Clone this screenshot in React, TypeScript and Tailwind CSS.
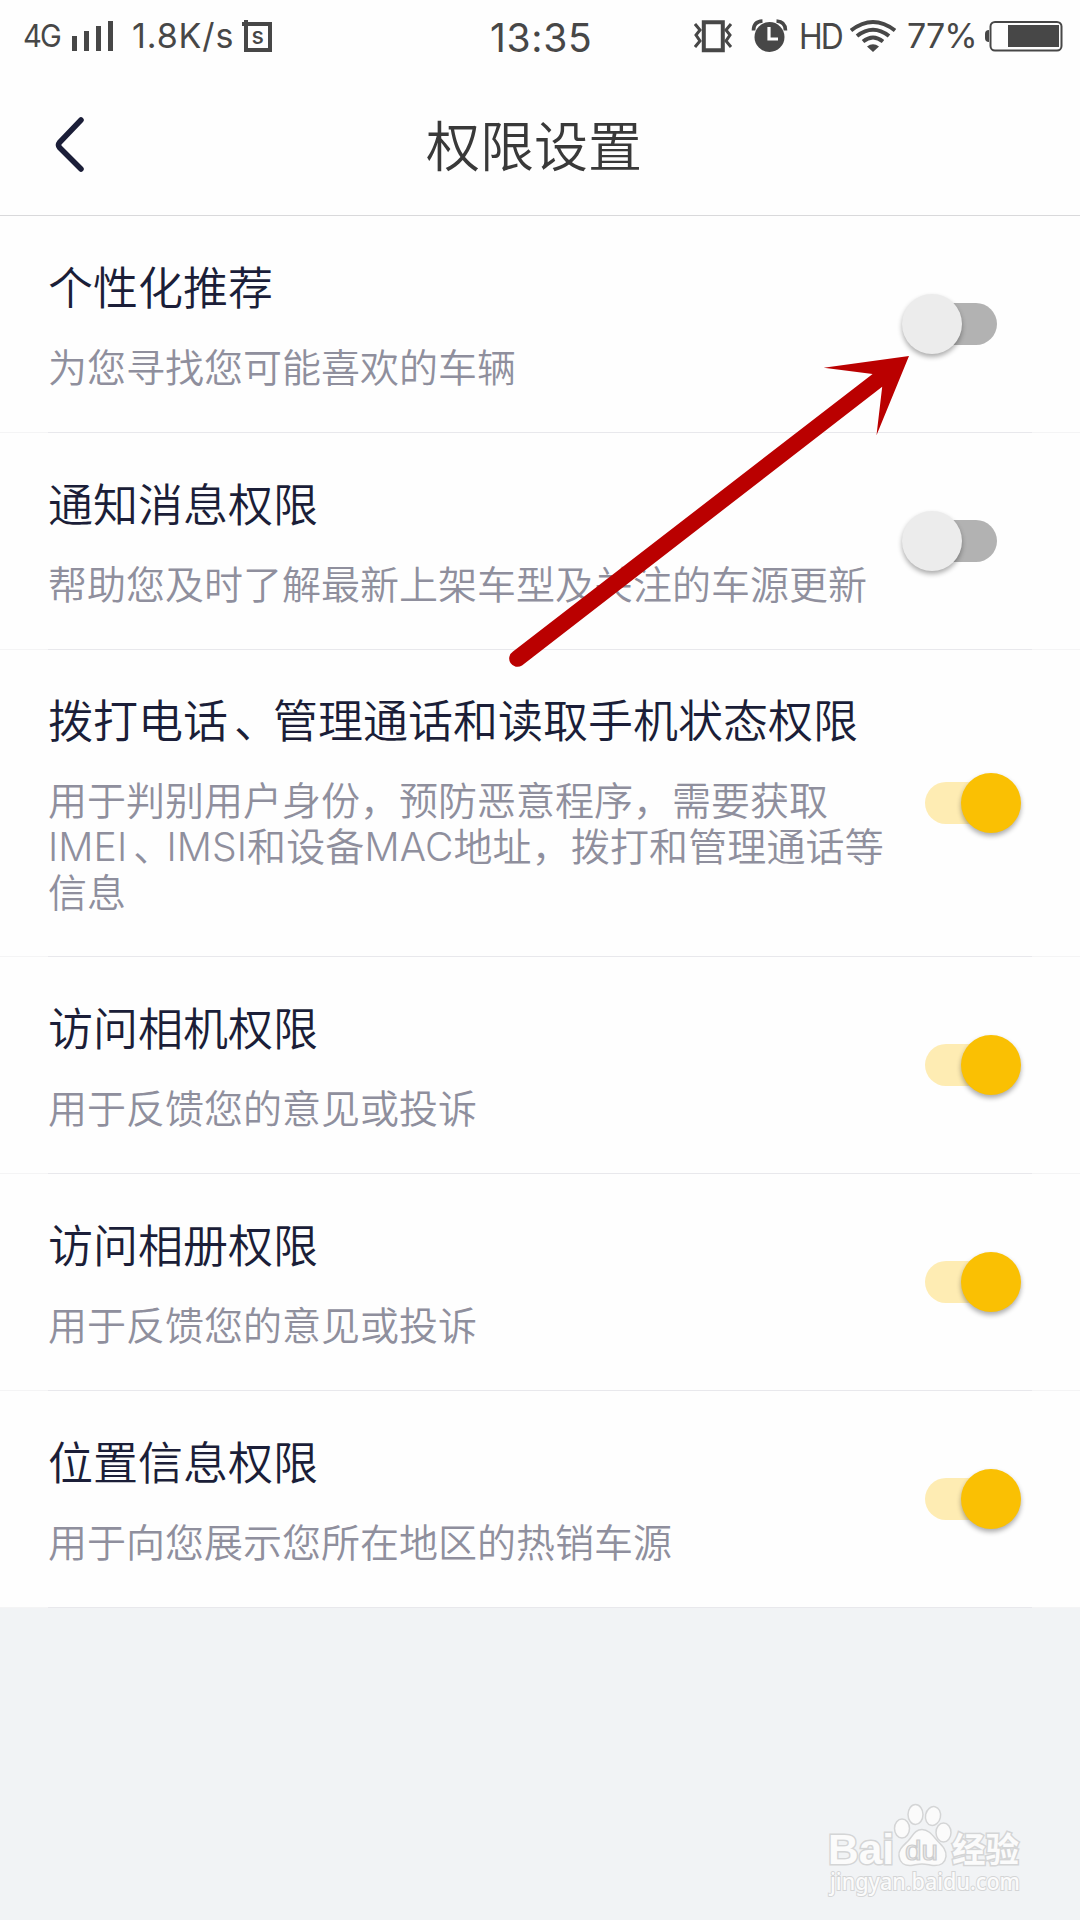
import React from 'react';

type Permission = { title: string; lines: string[]; on: boolean };

const permissions: Permission[] = [
  { title: '个性化推荐', lines: ['为您寻找您可能喜欢的车辆'], on: false },
  { title: '通知消息权限', lines: ['帮助您及时了解最新上架车型及关注的车源更新'], on: false },
  {
    title: '拨打电话、管理通话和读取手机状态权限',
    lines: [
      '用于判别用户身份，预防恶意程序，需要获取',
      'IMEI、IMSI和设备MAC地址，拨打和管理通话等',
      '信息',
    ],
    on: true,
  },
  { title: '访问相机权限', lines: ['用于反馈您的意见或投诉'], on: true },
  { title: '访问相册权限', lines: ['用于反馈您的意见或投诉'], on: true },
  { title: '位置信息权限', lines: ['用于向您展示您所在地区的热销车源'], on: true },
];

function StatusBar() {
  return (
    <div className="relative flex h-[72px] items-center justify-between pl-[23px] pr-[17px] font-['Inter','Noto_Sans',sans-serif] text-[#474747]">
      <div className="flex items-center">
        <span className="w-[49px] origin-left scale-x-[0.94] text-[31px] leading-[72px] tracking-[-2px]">4G</span>
        <svg width="41" height="72" viewBox="0 0 41 72" fill="#474747">
          <path d="M0 36h5v15H0zM12 31h5v20h-5zM24 26h5v25h-5zM36 21h5v30h-5z" />
        </svg>
        <span className="ml-[19px] w-[110px] text-[34px] leading-[76px] tracking-[0.9px]">1.8K/s</span>
        <span className="relative block h-[72px] w-[30px]">
          <svg className="absolute inset-0" width="30" height="72" viewBox="0 0 30 72" fill="none" stroke="#474747">
            <path d="M4 24h24v26H4z" strokeWidth="4" />
            <path d="M0 24h6M4 20v5" strokeWidth="4" />
          </svg>
          <span className="absolute left-[9.5px] top-[24px] text-[23px] font-medium leading-[24px]">s</span>
        </span>
      </div>
      <span className="absolute left-[490px] top-0 text-[39px] leading-[76px] tracking-[0.7px]">13:35</span>
      <div className="flex items-center">
        <svg width="94" height="72" viewBox="0 0 94 72" fill="none" stroke="#474747">
          <path d="M9.800 22.300h19v28h-19z" strokeWidth="4" />
          <path d="M1 24l5 6-4 5 4 6-5 6M37 24l-5 6 4 5-4 6 5 6" strokeWidth="3" />
          <circle cx="75.500" cy="37" r="15" fill="#474747" stroke="none" />
          <path d="M59.500 30.500q0-9 9-9.500M91.500 30.500q0-9-9-9.500" strokeWidth="3.600" />
          <path d="M75 27v12h9" stroke="#fefefe" strokeWidth="3.200" />
        </svg>
        <span className="ml-[11px] w-[51px] origin-left scale-x-[0.91] text-[35px] font-[375] leading-[73px] tracking-[-2.200px]">HD</span>
        <svg width="46" height="72" viewBox="0 0 46 72" fill="none" stroke="#474747" strokeWidth="4">
          <path d="M1 30.500q22-17 44 0M7 36q16-12.500 32 0M13 41.500q10-8 20 0" />
          <path d="M17 46.500q6-4.500 12 0L23 52z" fill="#474747" stroke="none" />
        </svg>
        <span className="ml-[11px] w-[77px] text-[34px] font-[375] leading-[76px] tracking-[-1px]">77%</span>
        <svg width="79" height="72" viewBox="0 0 79 72">
          <path d="M5 30v12q-4 0-4-4v-4q0-4 4-4z" fill="#474747" />
          <rect x="6.500" y="22" width="71" height="28.500" rx="4.500" fill="none" stroke="#474747" strokeWidth="2" />
          <rect x="24" y="25" width="51" height="22" fill="#474747" />
        </svg>
      </div>
    </div>
  );
}

function Header() {
  return (
    <header className="relative flex h-[144px] items-center border-b border-[#d9d9db] pl-[54px]">
      <svg width="34" height="60" viewBox="0 0 34 60" fill="none" stroke="#1b1e38" strokeWidth="5.500" strokeLinecap="round" strokeLinejoin="round">
        <path d="M27.500 6L6 28.500q-2 2.500 0 5L27.500 55" transform="translate(-.5 0)" />
      </svg>
      <h1 className="ml-[338px] mt-[8px] text-[54px] font-[350] leading-[64px] text-[#393939]">权限设置</h1>
    </header>
  );
}

function Switch({ on }: { on: boolean }) {
  return on ? (
    <span className="relative mr-[59px] flex h-[60px] w-[96px] shrink-0 items-center justify-end">
      <span className="absolute left-0 top-[9px] h-[42px] w-[90px] rounded-full bg-[#feecb3]" />
      <span className="relative h-[60px] w-[60px] rounded-full bg-[#fac003] shadow-[0_3px_5px_rgba(0,0,0,0.32)]" />
    </span>
  ) : (
    <span className="relative mr-[83px] flex h-[60px] w-[95px] shrink-0 items-center">
      <span className="absolute right-0 top-[9px] h-[42px] w-[90px] rounded-full bg-[#b2b2b2]" />
      <span className="relative h-[60px] w-[60px] rounded-full bg-[#ececec] shadow-[0_3px_5px_rgba(0,0,0,0.32)]" />
    </span>
  );
}

/* The enumeration comma sits toward the middle of its cell. */
function Phrase({ text }: { text: string }) {
  return (
    <>
      {text.split('、').map((part, i) => (
        <React.Fragment key={part}>
          {i > 0 && <span className="relative left-[6px]">、</span>}
          {part}
        </React.Fragment>
      ))}
    </>
  );
}

function Row({ item }: { item: Permission }) {
  const tall = item.lines.length > 1;
  return (
    <section className={tall ? 'flex h-[307px] flex-col' : 'flex h-[217px] flex-col'}>
      <div className="flex flex-1 items-center justify-between pl-[48px]">
        <div className={tall ? 'flex h-full flex-col whitespace-nowrap pt-[45px]' : 'flex h-full flex-col whitespace-nowrap pt-[46px]'}>
          <h2 className="text-[45px] font-[350] leading-[54px] text-[#1b1e38]"><Phrase text={item.title} /></h2>
          <p className="mt-[29px] text-[39px] font-[350] leading-[46px] text-[#8f8f9d]">
            {item.lines.map((line) => (
              <span key={line} className={line.startsWith('IMEI') ? 'block tracking-[0.12px]' : 'block'}>
                <Phrase text={line} />
              </span>
            ))}
          </p>
        </div>
        <Switch on={item.on} />
      </div>
      <div className="flex h-px bg-[#f4f4f5]">
        <div className="mx-[48px] flex-1 bg-[#e8e8ec]" />
      </div>
    </section>
  );
}

function Arrow() {
  return (
    <svg className="absolute left-[500px] top-[340px]" width="420" height="340" viewBox="500 340 420 340" fill="#ba0000">
      <path d="M909 356L823.700 367.700 872.600 374 513 651.500A8.300 8.300 0 0 0 522 665.500L882.200 386.700 876.500 435.300z" />
    </svg>
  );
}

function Watermark() {
  return (
    <svg className="absolute left-[820px] top-[1796px] overflow-visible" width="210" height="110" viewBox="820 1796 210 110" fill="#fbfbfb" stroke="#d4d5d6" strokeWidth="1.500">
      <g style={{ paintOrder: 'stroke' }} strokeWidth="3">
        <text x="828" y="1864" textLength="66" lengthAdjust="spacingAndGlyphs" className="font-['Liberation_Sans',sans-serif] text-[43px] font-bold">Bai</text>
        <text x="952" y="1862" textLength="67" lengthAdjust="spacingAndGlyphs" className="font-['Noto_Sans_CJK_SC',sans-serif] text-[34px] font-bold">经验</text>
        <text x="830" y="1890" textLength="190" lengthAdjust="spacingAndGlyphs" strokeWidth="2" className="font-['Noto_Sans',sans-serif] text-[23px] font-medium">jingyan.baidu.com</text>
      </g>
      <ellipse cx="902" cy="1828.500" rx="7.500" ry="9.500" />
      <ellipse cx="915.500" cy="1814.500" rx="7.500" ry="10" />
      <ellipse cx="933" cy="1816" rx="7.500" ry="9.500" transform="rotate(12 933 1816)" />
      <ellipse cx="943.500" cy="1832.500" rx="7.500" ry="9.500" />
      <path d="M922 1829.500c-7 0-9 6-14 11.500-5 5-10 9-9 15 1 7 6 10 12 9.500 4-.5 7-1.500 11-1.500s7 1 11 1.500c7 .5 12-2 13-9 .7-6-3-10-8-15-5-5.500-9-12-16-12z" />
      <text x="905" y="1860" textLength="33" lengthAdjust="spacingAndGlyphs" fill="#ececec" stroke="#cccdce" strokeWidth="1.200" className="font-['Liberation_Sans',sans-serif] text-[27px]">du</text>
    </svg>
  );
}

export default function App() {
  return (
    <div className="relative h-[1920px] w-[1080px] overflow-hidden bg-[#f1f3f5] font-['Inter','Noto_Sans_CJK_SC',sans-serif]">
      <div className="bg-[#fefefe]">
        <StatusBar />
        <Header />
        <main>
          {permissions.map((item) => (
            <Row key={item.title} item={item} />
          ))}
        </main>
      </div>
      <Arrow />
      <Watermark />
    </div>
  );
}
